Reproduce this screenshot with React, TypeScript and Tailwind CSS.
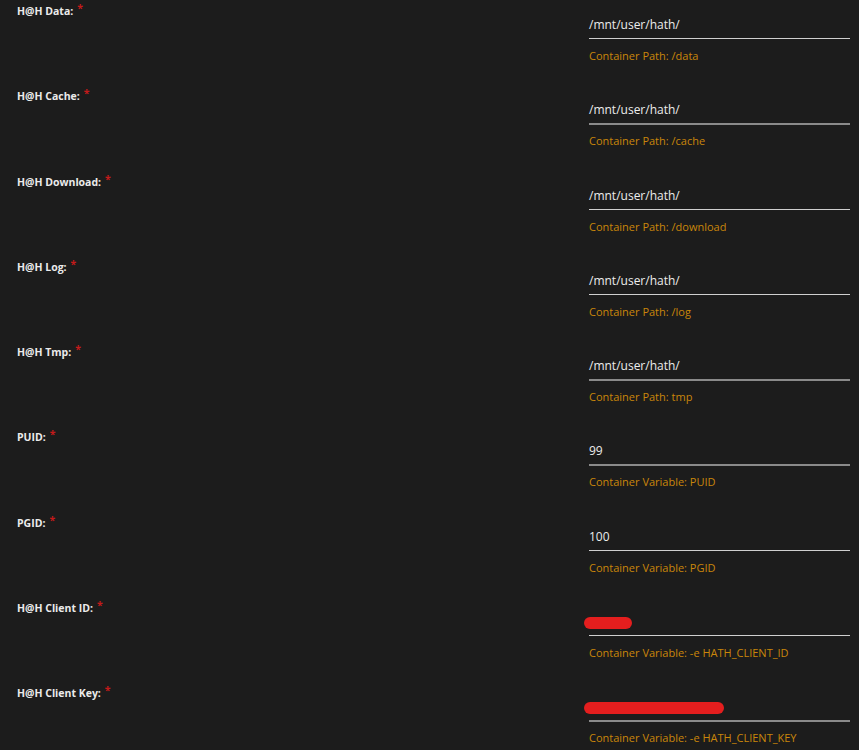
import React from "react";

type Row = {
  label: string;
  value?: string;
  redact?: number;
  help: string;
  heavy?: boolean;
};

const rows: Row[] = [
  { label: "H@H Data:", value: "/mnt/user/hath/", help: "Container Path: /data" },
  { label: "H@H Cache:", value: "/mnt/user/hath/", help: "Container Path: /cache", heavy: true },
  { label: "H@H Download:", value: "/mnt/user/hath/", help: "Container Path: /download" },
  { label: "H@H Log:", value: "/mnt/user/hath/", help: "Container Path: /log" },
  { label: "H@H Tmp:", value: "/mnt/user/hath/", help: "Container Path: tmp", heavy: true },
  { label: "PUID:", value: "99", help: "Container Variable: PUID", heavy: true },
  { label: "PGID:", value: "100", help: "Container Variable: PGID" },
  { label: "H@H Client ID:", redact: 48, help: "Container Variable: -e HATH_CLIENT_ID" },
  { label: "H@H Client Key:", redact: 140, help: "Container Variable: -e HATH_CLIENT_KEY", heavy: true },
];

export default function App() {
  return (
    <div
      className="w-[859px] h-[750px] overflow-hidden bg-[#1c1c1c]"
      style={{ fontFamily: '"Open Sans", "Noto Sans", sans-serif' }}
    >
      {rows.map((r, i) => (
        <div key={i} className="flex h-[85.25px]">
          <div className="w-[589px] pl-[17px] pt-[3px] text-[10.5px] leading-[16px]">
            <span className="font-bold text-[#ebebeb]">{r.label}</span>
            <span className="ml-[4px] font-bold text-[#c41a1a] relative top-[-3px]">*</span>
          </div>
          <div className="w-[261px] flex flex-col">
            <div className="h-[38px] flex items-end pb-[6px] relative">
              {r.value ? (
                <span className="text-[12px] text-[#ececec] leading-[14px]">{r.value}</span>
              ) : (
                <span
                  className="absolute left-[-5px] top-[20px] h-[12px] rounded-full bg-[#e41e1e]"
                  style={{ width: r.redact }}
                />
              )}
            </div>
            {r.heavy ? (
              <div className="h-[2px] bg-[#8a8a8a]" />
            ) : (
              <div className="h-px bg-[#cfcfcf]" />
            )}
            <div className={`${r.heavy ? "pt-[9px]" : "pt-[10px]"} text-[11px] leading-[14px] text-[#c9860a]`}>
              {r.help}
            </div>
          </div>
        </div>
      ))}
    </div>
  );
}
